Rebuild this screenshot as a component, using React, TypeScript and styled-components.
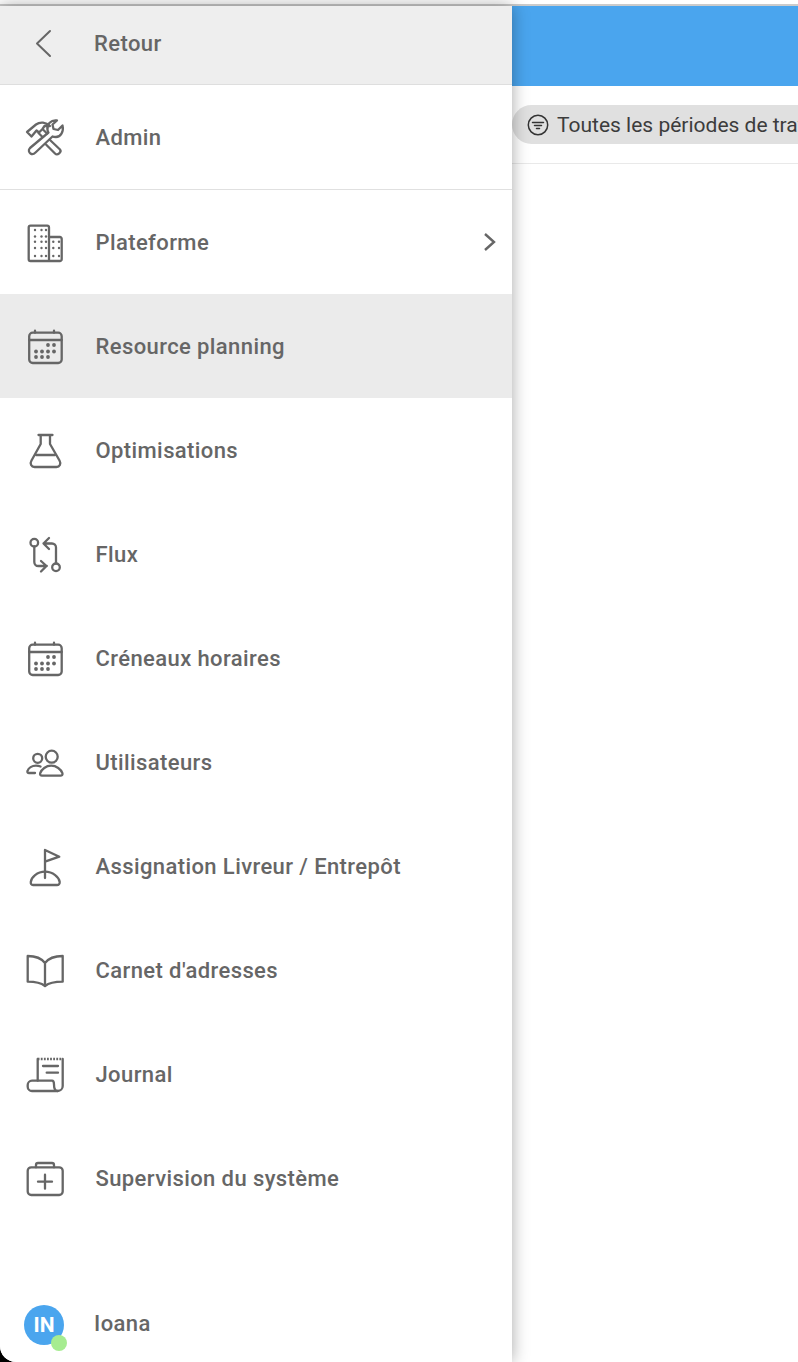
import React from "react";
import styled, { createGlobalStyle } from "styled-components";

const Global = createGlobalStyle`
  html, body { margin: 0; padding: 0; background: #000; }
  #root { height: 1362px; overflow: hidden; }
  * { box-sizing: border-box; }
`;

const Screen = styled.div`
  width: 798px;
  height: 1362px;
  display: flex;
  flex-direction: column;
  background: #fff;
  overflow: hidden;
  border-bottom-left-radius: 16px;
  font-family: Roboto, "Liberation Sans", sans-serif;
`;
const TopEdge = styled.div`
  height: 6px;
  flex: none;
  background: #fff;
  border-bottom: 2px solid #cbcbcb;
`;
const Body = styled.div`
  flex: 1;
  min-height: 0;
  display: flex;
`;
const Drawer = styled.nav`
  width: 512px;
  flex: none;
  display: flex;
  flex-direction: column;
  background: #fff;
  box-shadow: 0 0 16px rgba(0, 0, 0, 0.35);
  position: relative;
  z-index: 1;
`;
const BackRow = styled.div`
  height: 79px;
  flex: none;
  display: flex;
  align-items: center;
  padding: 0 0 3px 32px;
  gap: 38px;
  background: #eeeeee;
  border-bottom: 1px solid #dedede;
  color: #666;
  font-size: 22px;
  font-weight: 500;
  letter-spacing: 0.4px;
`;
const Row = styled.div<{ $active?: boolean; $divided?: boolean }>`
  height: ${(p) => (p.$divided ? 105 : 104)}px;
  flex: none;
  display: flex;
  align-items: center;
  padding: 0 15px 0 24px;
  background: ${(p) => (p.$active ? "#ebebeb" : "#fff")};
  border-bottom: ${(p) => (p.$divided ? "1px solid #e0e0e0" : "none")};
`;
const IconSlot = styled.span`
  width: 42px;
  height: 42px;
  flex: none;
  color: #666;
  display: block;
  svg { display: block; width: 42px; height: 42px; }
`;
const Label = styled.span`
  margin-left: 29.5px;
  flex: 1;
  color: #666;
  font-size: 22px;
  font-weight: 500;
  letter-spacing: 0.4px;
  white-space: nowrap;
`;
const Spacer = styled.div`
  flex: 1;
`;
const Footer = styled.div`
  flex: none;
  height: 78px;
  display: flex;
  align-items: center;
  padding: 0 0 0 24px;
`;
const Avatar = styled.div`
  width: 40px;
  height: 40px;
  border-radius: 50%;
  background: #4aa5ee;
  color: #fff;
  font-size: 21px;
  font-weight: 700;
  display: flex;
  align-items: center;
  justify-content: center;
  position: relative;
  flex: none;
  margin-top: 3px;
`;
const Presence = styled.span`
  position: absolute;
  right: -3px;
  bottom: -6px;
  width: 16px;
  height: 16px;
  border-radius: 50%;
  background: #a6ec90;
`;
const UserName = styled.span`
  margin-left: 30px;
  color: #666;
  font-size: 22px;
  font-weight: 500;
  letter-spacing: 0.4px;
`;
const Main = styled.main`
  flex: 1;
  min-width: 0;
  display: flex;
  flex-direction: column;
  overflow: hidden;
`;
const AppBar = styled.div`
  height: 80px;
  flex: none;
  background: #4aa5ee;
`;
const FilterBar = styled.div`
  height: 78px;
  flex: none;
  padding-top: 19px;
  border-bottom: 1px solid #e9e9e9;
`;
const Chip = styled.div`
  height: 39px;
  width: 420px;
  display: flex;
  align-items: center;
  gap: 8px;
  padding-left: 15px;
  border-radius: 20px;
  background: #e0e0e0;
  color: #3c3c3c;
  font-size: 21px;
  white-space: nowrap;
  svg { display: block; flex: none; }
`;

const S = { fill: "none", stroke: "currentColor", strokeWidth: 2.3, strokeLinecap: "round", strokeLinejoin: "round" } as const;
const Ico = ({ children }: { children: React.ReactNode }) => (
  <IconSlot>
    <svg viewBox="0 0 42 42" {...S}>{children}</svg>
  </IconSlot>
);

const Dots = ({ pts, r = 1.9 }: { pts: [number, number][]; r?: number }) => (
  <g fill="currentColor" stroke="none">
    {pts.map(([x, y]) => <circle key={x + "-" + y} cx={x} cy={y} r={r} />)}
  </g>
);

const calendarDots: [number, number][] = [
  [24, 20], [30, 20],
  [12, 26.5], [18, 26.5], [24, 26.5], [30, 26.5],
  [12, 32], [18, 32], [24, 32],
];
const towerDots: [number, number][] = [11, 17.5, 22].flatMap((x) =>
  [9, 15.5, 20.7, 27, 35].map((y) => [x, y] as [number, number])
);
const annexDots: [number, number][] = [29.3, 35].flatMap((x) =>
  [20.7, 27, 35].map((y) => [x, y] as [number, number])
);

const Tools = () => (
  <Ico>
    <path d="M3 16 12 8.500C16 5.500 22 6 26 10h-5.500L18.500 13 15 16.500 12.500 14.500 7.500 20.500z" />
    <path d="M19 13.500 23 17.500M14.500 17 18 20.500M26 24 36 33.500c2 2.500-2.500 6.500-5 4L22 28.500" />
    <path d="M38.500 9.500 34 14l-4.500-1-1-4.500L33 4.500c-6-1-10.500 4-9.500 9.500.2 1 .5 2 1 2.500L6 32c-2 2-1 4.500.5 5.500s3.500.5 5-1l17-16c1 .5 2.500.5 3.500.5 4.500 0 8-5 6.500-11.500z" />
  </Ico>
);
const Building = () => (
  <Ico>
    <path d="M25 40V6.500A1.800 1.800 0 0 0 23.200 4.700H6.500A1.800 1.800 0 0 0 4.700 6.500v31.700A1.800 1.800 0 0 0 6.500 40h29.400a1.800 1.800 0 0 0 1.800-1.800V17.800A1.800 1.800 0 0 0 35.900 16H25" />
    <Dots pts={towerDots.concat(annexDots)} r={1.2} />
  </Ico>
);
const Calendar = () => (
  <Ico>
    <rect x="5.200" y="7.700" width="32.500" height="30.300" rx="3.500" />
    <path d="M5.200 15h32.500M11 5.700v2M30 5.700v2" />
    <Dots pts={calendarDots} />
  </Ico>
);
const Flask = () => (
  <Ico>
    <path d="M14.500 6h14M16.700 6v9L7.500 31.500c-2 3.500 0 6.500 3 6.500h22c3 0 5-3 3-6.500L26 15V6" />
    <path d="M12 26h19" />
  </Ico>
);
const Flow = () => (
  <Ico>
    <circle cx="10.300" cy="9.700" r="3.800" />
    <circle cx="32" cy="34.300" r="3.800" />
    <path d="M10.300 13.500V29a4 4 0 0 0 4 4h8.500M17 28l5.500 5-5.500 5.500" />
    <path d="M32 30.500V14.500a4 4 0 0 0-4-4h-8.500M25 5l-5.500 5.500L25 16" />
  </Ico>
);
const Users = () => (
  <Ico>
    <circle cx="13.700" cy="17.300" r="4.500" />
    <circle cx="27.700" cy="15.700" r="6" />
    <path d="M11 32H5c-1.200 0-2-.8-1.500-2 1-3 4.500-5.300 8.500-5.300 1.500 0 3 .2 4.500.8" />
    <path d="M18 34.700c-1.300 0-2.300-1-1.800-2.500 1.300-4 5.800-7.500 11-7.500s9.800 3.500 11.200 7.500c.5 1.500-.5 2.500-1.800 2.500z" />
  </Ico>
);
const Flag = () => (
  <Ico>
    <path d="M21 33V5l14.300 6.700L21 16.700" />
    <path d="M21 26.700C13 26.700 7.300 32.500 6.800 37c-.2 1.800.5 3 2.200 3h24c1.700 0 2.900-1.200 2.700-3-.5-4.500-6.700-10.300-14.700-10.300z" />
  </Ico>
);
const Book = () => (
  <Ico>
    <path d="M21 14C18 10 12 7 3.700 7v25.700c7 0 12.500 .5 17.300 4.300 4.800-3.800 10.300-4.300 17.700-4.300V7C30 7 24 10 21 14zM21 14v23" />
  </Ico>
);
const Receipt = () => (
  <Ico>
    <path d="M13.700 6h25" strokeDasharray="1.800 1.300" strokeLinecap="butt" />
    <path d="M13.700 6v21.700M38.700 6v27a5 5 0 0 1-5 5" />
    <path d="M28 27.700H8a4.300 4.300 0 0 0-4.300 4.300v1.700A4.300 4.300 0 0 0 8 38h25.700c-3 0-3.700-3-3.700-6.500 0-2-.5-3.800-2-3.800z" />
    <path d="M19 13h15M22.700 19.700H34" />
  </Ico>
);
const Kit = () => (
  <Ico>
    <rect x="3.700" y="10.300" width="35" height="27.700" rx="3.500" />
    <path d="M12 10.300V8a2 2 0 0 1 2-2h14a2 2 0 0 1 2 2v2.300M14 24.700h14M21 17.700v14" />
  </Ico>
);
const Back = () => (
  <svg width="24" height="32" viewBox="0 0 24 32" fill="none" stroke="currentColor" strokeWidth="2" strokeLinecap="round" strokeLinejoin="round" style={{ flex: "none" }}>
    <path d="M18 3 5 15.500 18 28" />
  </svg>
);
const Chevron = () => (
  <svg width="14" height="20" viewBox="0 0 14 20" fill="none" stroke="#666" strokeWidth="2.400" style={{ flex: "none" }}>
    <path d="M2 2l9 8-9 8" />
  </svg>
);
const FilterIcon = () => (
  <svg width="22" height="22" viewBox="0 0 22 22" fill="none" stroke="#333" strokeWidth="1.500" strokeLinecap="round">
    <circle cx="11" cy="11" r="9.700" />
    <path d="M5.500 8.500h11M7.500 11.500h7M9.500 14.500h3" />
  </svg>
);

const items: { label: string; icon: React.ReactNode; active?: boolean; chevron?: boolean }[] = [
  { label: "Plateforme", icon: <Building />, chevron: true },
  { label: "Resource planning", icon: <Calendar />, active: true },
  { label: "Optimisations", icon: <Flask /> },
  { label: "Flux", icon: <Flow /> },
  { label: "Créneaux horaires", icon: <Calendar /> },
  { label: "Utilisateurs", icon: <Users /> },
  { label: "Assignation Livreur / Entrepôt", icon: <Flag /> },
  { label: "Carnet d'adresses", icon: <Book /> },
  { label: "Journal", icon: <Receipt /> },
  { label: "Supervision du système", icon: <Kit /> },
];

export default function App() {
  return (
    <>
      <Global />
      <Screen>
        <TopEdge />
        <Body>
          <Drawer>
            <BackRow><Back />Retour</BackRow>
            <Row $divided><Tools /><Label>Admin</Label></Row>
            {items.map((it) => (
              <Row key={it.label} $active={it.active}>
                {it.icon}
                <Label>{it.label}</Label>
                {it.chevron && <Chevron />}
              </Row>
            ))}
            <Spacer />
            <Footer>
              <Avatar>IN<Presence /></Avatar>
              <UserName>Ioana</UserName>
            </Footer>
          </Drawer>
          <Main>
            <AppBar />
            <FilterBar>
              <Chip><FilterIcon />Toutes les périodes de travail</Chip>
            </FilterBar>
          </Main>
        </Body>
      </Screen>
    </>
  );
}
